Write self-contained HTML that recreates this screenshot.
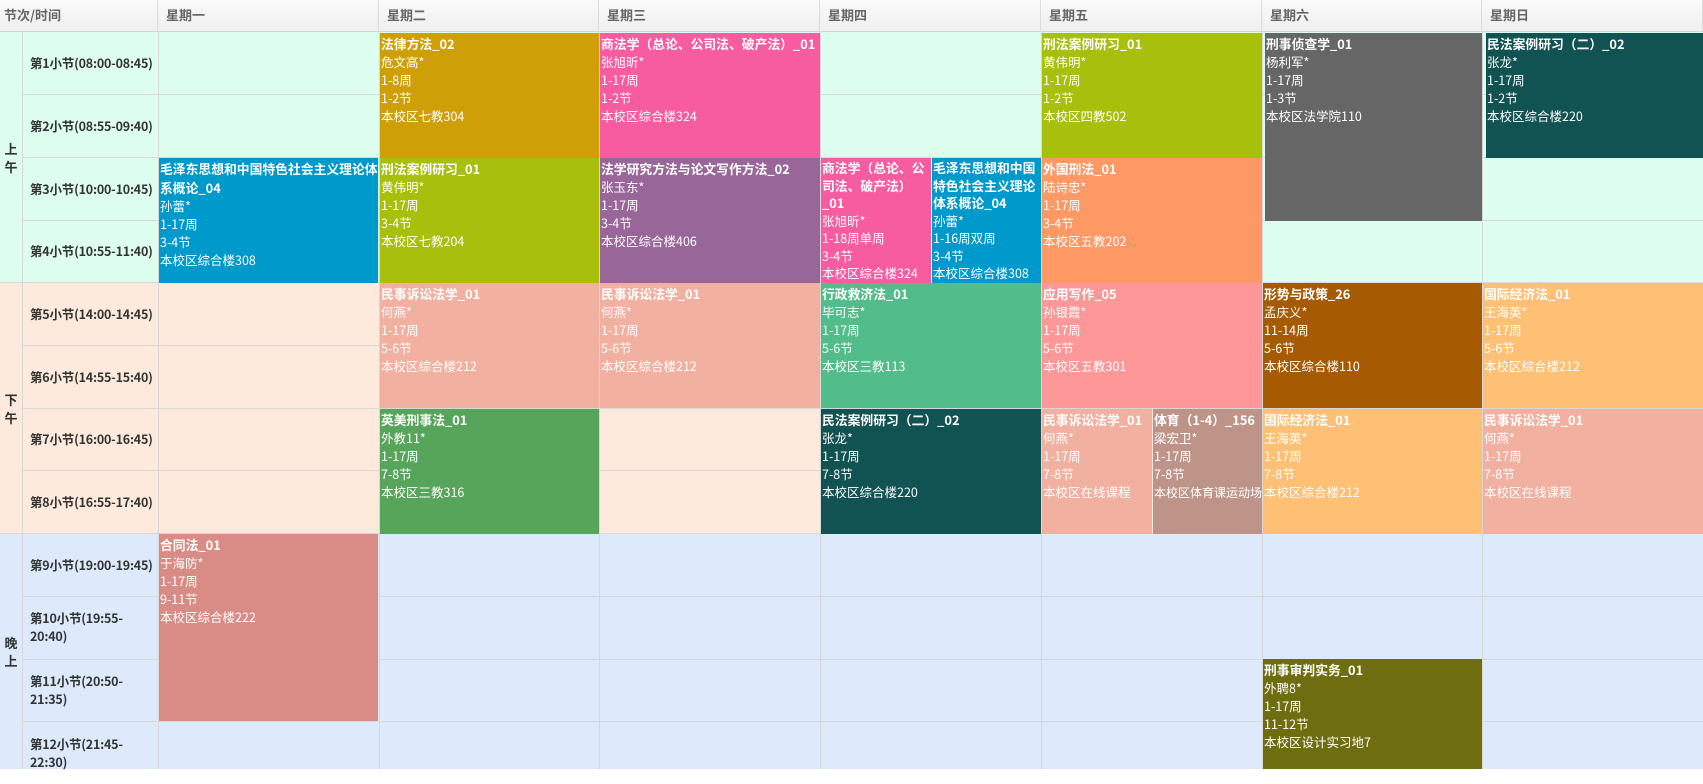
<!DOCTYPE html>
<html><head><meta charset="utf-8"><style>
*{margin:0;padding:0;box-sizing:border-box}
body{width:1703px;height:769px;overflow:hidden;position:relative;font-family:"Noto Sans CJK SC","Liberation Sans",sans-serif;background:#fff}
.h{position:absolute;top:0;height:32px;background:linear-gradient(#fafafa,#efefef);border-right:1px solid #ddd;border-bottom:1px solid #d5d5d5;color:#666;font-size:13px;font-weight:bold;line-height:30px;padding-left:8px}
.bg{position:absolute;left:0;width:1703px}
.hl{position:absolute;left:22px;width:1681px;height:1px;background:#d8d8d8}
.vl{position:absolute;top:32px;height:737px;width:1px;background:#d8d8d8}
.t{position:absolute;left:22px;width:136px;height:62px;font-size:12.5px;font-weight:bold;color:#333;display:flex;align-items:center;padding-left:8px;line-height:18px;white-space:nowrap;letter-spacing:-0.2px}
.s{position:absolute;left:0;width:22px;font-size:13px;font-weight:bold;color:#333;display:flex;align-items:center;justify-content:center;text-align:center;line-height:18px}
.b{position:absolute;color:#fff;font-size:12.5px;line-height:18px;padding:1px 0 0 1px;overflow:hidden}
.b b{display:block;font-size:12.8px;line-height:19px}
</style></head><body>
<div class="bg" style="top:32px;height:251px;background:#ddfdee"></div>
<div class="bg" style="top:283px;height:251px;background:#fdeadc"></div>
<div class="bg" style="top:534px;height:235px;background:#dceafc"></div>

<div class="h" style="left:0;width:158px;padding-left:4px">节次/时间</div>
<div class="h" style="left:158px;width:221px">星期一</div>
<div class="h" style="left:379px;width:220px">星期二</div>
<div class="h" style="left:599px;width:221px">星期三</div>
<div class="h" style="left:820px;width:221px">星期四</div>
<div class="h" style="left:1041px;width:221px">星期五</div>
<div class="h" style="left:1262px;width:220px">星期六</div>
<div class="h" style="left:1482px;width:221px">星期日</div>

<div class="hl" style="top:94px"></div><div class="hl" style="top:157px"></div><div class="hl" style="top:220px"></div>
<div class="hl" style="top:282px;left:0;width:1703px"></div><div class="hl" style="top:345px"></div><div class="hl" style="top:408px"></div><div class="hl" style="top:470px"></div>
<div class="hl" style="top:533px;left:0;width:1703px"></div><div class="hl" style="top:596px"></div><div class="hl" style="top:659px"></div><div class="hl" style="top:721px"></div>
<div class="vl" style="left:22px"></div><div class="vl" style="left:158px"></div><div class="vl" style="left:379px"></div><div class="vl" style="left:599px"></div><div class="vl" style="left:820px"></div><div class="vl" style="left:1041px"></div><div class="vl" style="left:1262px"></div><div class="vl" style="left:1482px"></div>

<div class="s" style="top:32px;height:251px">上<br>午</div>
<div class="s" style="top:283px;height:251px">下<br>午</div>
<div class="s" style="top:534px;height:235px">晚<br>上</div>

<div class="t" style="top:32px">第1小节(08:00-08:45)</div>
<div class="t" style="top:95px">第2小节(08:55-09:40)</div>
<div class="t" style="top:158px">第3小节(10:00-10:45)</div>
<div class="t" style="top:220px">第4小节(10:55-11:40)</div>
<div class="t" style="top:283px">第5小节(14:00-14:45)</div>
<div class="t" style="top:346px">第6小节(14:55-15:40)</div>
<div class="t" style="top:408px">第7小节(16:00-16:45)</div>
<div class="t" style="top:471px">第8小节(16:55-17:40)</div>
<div class="t" style="top:534px">第9小节(19:00-19:45)</div>
<div class="t" style="top:596px">第10小节(19:55-<br>20:40)</div>
<div class="t" style="top:659px">第11小节(20:50-<br>21:35)</div>
<div class="t" style="top:722px">第12小节(21:45-<br>22:30)</div>

<!-- Mon -->
<div class="b" style="left:159px;top:158px;width:219px;height:125px;background:#0099cc"><b>毛泽东思想和中国特色社会主义理论体系概论_04</b>孙蕾*<br>1-17周<br>3-4节<br>本校区综合楼308</div>
<div class="b" style="left:159px;top:534px;width:219px;height:187px;background:#d98c85"><b>合同法_01</b>于海防*<br>1-17周<br>9-11节<br>本校区综合楼222</div>
<!-- Tue -->
<div class="b" style="left:380px;top:33px;width:219px;height:125px;background:#cf9f08"><b>法律方法_02</b>危文高*<br>1-8周<br>1-2节<br>本校区七教304</div>
<div class="b" style="left:380px;top:158px;width:219px;height:125px;background:#a8bf0b"><b>刑法案例研习_01</b>黄伟明*<br>1-17周<br>3-4节<br>本校区七教204</div>
<div class="b" style="left:380px;top:283px;width:219px;height:125px;background:#f2b0a0"><b>民事诉讼法学_01</b>何燕*<br>1-17周<br>5-6节<br>本校区综合楼212</div>
<div class="b" style="left:380px;top:409px;width:219px;height:125px;background:#57a55b"><b>英美刑事法_01</b>外教11*<br>1-17周<br>7-8节<br>本校区三教316</div>
<!-- Wed -->
<div class="b" style="left:600px;top:33px;width:220px;height:125px;background:#f85ca0"><b>商法学（总论、公司法、破产法）_01</b>张旭昕*<br>1-17周<br>1-2节<br>本校区综合楼324</div>
<div class="b" style="left:600px;top:158px;width:220px;height:125px;background:#996699"><b>法学研究方法与论文写作方法_02</b>张玉东*<br>1-17周<br>3-4节<br>本校区综合楼406</div>
<div class="b" style="left:600px;top:283px;width:220px;height:125px;background:#f2b0a0"><b>民事诉讼法学_01</b>何燕*<br>1-17周<br>5-6节<br>本校区综合楼212</div>
<!-- Thu -->
<div class="b" style="left:821px;top:158px;width:110px;height:125px;background:#f85ca0;line-height:17.5px"><b style="line-height:17.5px">商法学（总论、公司法、破产法）_01</b>张旭昕*<br>1-18周单周<br>3-4节<br>本校区综合楼324</div>
<div class="b" style="left:932px;top:158px;width:109px;height:125px;background:#0099cc;line-height:17.5px"><b style="line-height:17.5px">毛泽东思想和中国特色社会主义理论体系概论_04</b>孙蕾*<br>1-16周双周<br>3-4节<br>本校区综合楼308</div>
<div class="b" style="left:821px;top:283px;width:220px;height:125px;background:#52bd8a"><b>行政救济法_01</b>毕可志*<br>1-17周<br>5-6节<br>本校区三教113</div>
<div class="b" style="left:821px;top:409px;width:220px;height:125px;background:#115252"><b>民法案例研习（二）_02</b>张龙*<br>1-17周<br>7-8节<br>本校区综合楼220</div>
<!-- Fri -->
<div class="b" style="left:1042px;top:33px;width:220px;height:125px;background:#a8bf0b"><b>刑法案例研习_01</b>黄伟明*<br>1-17周<br>1-2节<br>本校区四教502</div>
<div class="b" style="left:1042px;top:158px;width:220px;height:125px;background:#fe9966"><b>外国刑法_01</b>陆诗忠*<br>1-17周<br>3-4节<br>本校区五教202</div>
<div class="b" style="left:1042px;top:283px;width:220px;height:125px;background:#fe9898"><b>应用写作_05</b>孙银霞*<br>1-17周<br>5-6节<br>本校区五教301</div>
<div class="b" style="left:1042px;top:409px;width:110px;height:125px;background:#f2b0a0"><b>民事诉讼法学_01</b>何燕*<br>1-17周<br>7-8节<br>本校区在线课程</div>
<div class="b" style="left:1153px;top:409px;width:109px;height:125px;background:#bf9488"><b>体育（1-4）_156</b>梁宏卫*<br>1-17周<br>7-8节<br><span style="white-space:nowrap;font-size:12px">本校区体育课运动场</span></div>
<!-- Sat -->
<div class="b" style="left:1265px;top:33px;width:217px;height:188px;background:#666666"><b>刑事侦查学_01</b>杨利军*<br>1-17周<br>1-3节<br>本校区法学院110</div>
<div class="b" style="left:1263px;top:283px;width:219px;height:125px;background:#a65a02"><b>形势与政策_26</b>孟庆义*<br>11-14周<br>5-6节<br>本校区综合楼110</div>
<div class="b" style="left:1263px;top:409px;width:219px;height:125px;background:#fec075"><b>国际经济法_01</b>王海英*<br>1-17周<br>7-8节<br>本校区综合楼212</div>
<div class="b" style="left:1263px;top:659px;width:219px;height:110px;background:#6e6e10"><b>刑事审判实务_01</b>外聘8*<br>1-17周<br>11-12节<br>本校区设计实习地7</div>
<!-- Sun -->
<div class="b" style="left:1486px;top:33px;width:217px;height:125px;background:#115252"><b>民法案例研习（二）_02</b>张龙*<br>1-17周<br>1-2节<br>本校区综合楼220</div>
<div class="b" style="left:1483px;top:283px;width:220px;height:125px;background:#fec075"><b>国际经济法_01</b>王海英*<br>1-17周<br>5-6节<br>本校区综合楼212</div>
<div class="b" style="left:1483px;top:409px;width:220px;height:125px;background:#f2b0a0"><b>民事诉讼法学_01</b>何燕*<br>1-17周<br>7-8节<br>本校区在线课程</div>
</body></html>
